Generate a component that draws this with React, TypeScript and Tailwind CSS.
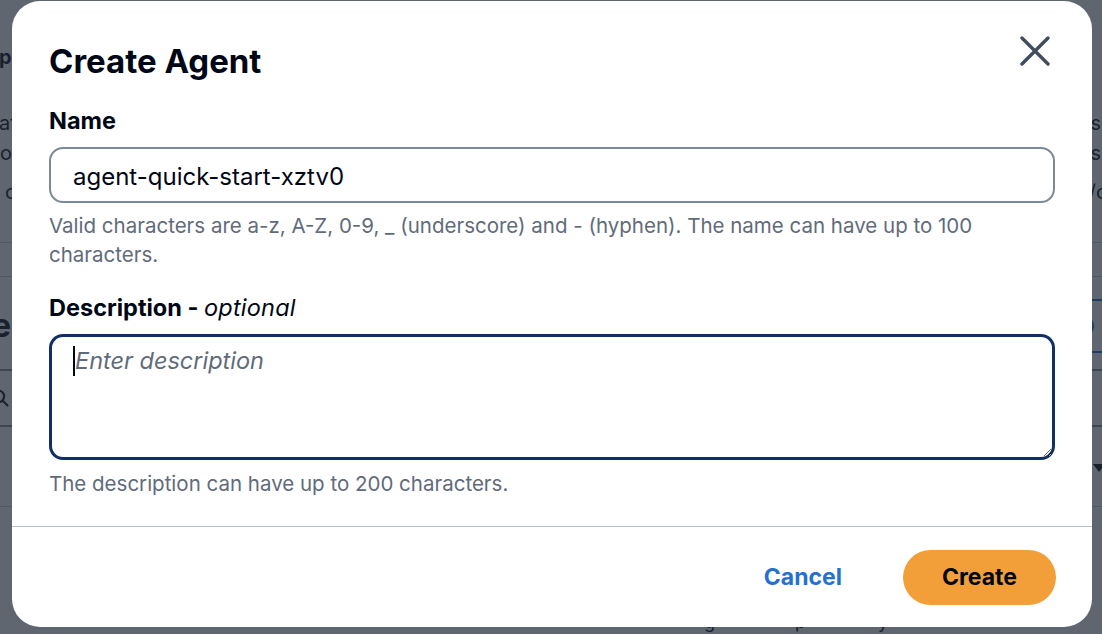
import React from 'react';

// page behind the dialog, only its edges show through the overlay
const BackgroundPage = () => (
  <div className="flex h-full w-full flex-col text-[20px] text-[#000716]">
    <div className="mt-[44px] flex h-[26px] items-center justify-between leading-[26px]">
      <span className="-ml-[1px] font-bold">pa</span>
    </div>
    <div className="mt-[40px] flex h-[26px] items-center justify-between leading-[26px]">
      <span className="-ml-[1px]">at</span>
      <span className="mr-[1px]">s</span>
    </div>
    <div className="mt-[4px] flex h-[26px] items-center justify-between leading-[26px]">
      <span>o</span>
      <span className="mr-[1px]">s</span>
    </div>
    <div className="mt-[13px] flex h-[26px] items-center justify-between leading-[26px]">
      <span className="ml-[5px]">c</span>
      <span className="-mr-[6px]">/o</span>
    </div>
    <div className="mt-[37px] h-px bg-[#c6ccd4]" />
    <div className="mt-[33px] h-px bg-[#c6ccd4]" />
    <div className="mt-[22px] flex h-[54px] items-center justify-between">
      <span className="-ml-[8px] text-[32px] font-bold">e</span>
      <span className="-mr-[30px] flex h-[54px] items-center border-y-2 border-[#0972d3] px-[6px] text-[22px] font-bold text-[#0972d3]">
        D
        <span className="ml-3">el</span>
      </span>
    </div>
    <div className="mt-[16px] h-[2px] bg-[#7d8998]" />
    <div className="flex h-[54px] items-center">
      <svg width="20" height="20" viewBox="0 0 24 24" fill="none" stroke="#000716" strokeWidth="2.5" strokeLinecap="round" className="-ml-[10px]">
        <circle cx="10" cy="10" r="7" />
        <path d="M15 15l6 6" />
      </svg>
    </div>
    <div className="h-[2px] bg-[#7d8998]" />
    <div className="flex h-[79px] items-start justify-end pt-[36px]">
      <svg width="14" height="10" viewBox="0 0 14 10" className="-mr-[4px]">
        <path d="M1 1h12L7 9z" fill="#000716" />
      </svg>
    </div>
    <div className="h-px bg-[#c6ccd4]" />
    <div className="mt-[103px] flex h-[24px] items-start text-[18px] leading-[24px]">
      <span className="ml-[704px]">g</span>
      <span className="ml-[80px]">p</span>
      <span className="ml-[72px]">y</span>
    </div>
  </div>
);

const CloseIcon = () => (
  <svg width="30" height="30" viewBox="0 0 30 30" fill="none" stroke="#414d5c" strokeWidth="3.4" strokeLinecap="round">
    <path d="M2 2l26 26M28 2L2 28" />
  </svg>
);

export default function App() {
  return (
    <div className="relative h-[634px] w-[1102px] overflow-hidden bg-white font-['Inter',sans-serif]">
      <BackgroundPage />

      {/* modal overlay */}
      <div className="absolute inset-0 bg-[rgba(35,43,55,0.72)] pl-3 pt-px">
        <div className="flex h-[626px] w-[1080px] flex-col rounded-[28px] bg-white text-[#000716]">
          <div className="flex items-start justify-between pl-[37px] pr-[42px] pt-[40px]">
            <h2 className="text-[33px] font-bold leading-[40px]">Create Agent</h2>
            <button className="-mt-[5px]" aria-label="Close">
              <CloseIcon />
            </button>
          </div>

          <div className="flex flex-1 flex-col px-[37px]">
            <label className="mt-[25px] text-[23.5px] font-bold leading-[30px]">Name</label>
            <input
              readOnly
              value="agent-quick-start-xztv0"
              className="mt-[11px] h-[56px] w-full rounded-[14px] border-2 border-[#7d8998] px-[22px] pt-[3px] text-[24px] text-[#000716] outline-none"
            />
            <p className="mt-[8px] text-[20.5px] leading-[29px] text-[#5f6b7a]">
              Valid characters are a-z, A-Z, 0-9, _ (underscore) and - (hyphen). The name can have up to 100
              characters.
            </p>

            <label className="mt-[24px] text-[23.5px] leading-[30px]">
              <span className="font-bold">Description - </span>
              <span className="italic tracking-[0.2px]">optional</span>
            </label>
            <div className="relative mt-[11px]">
              <textarea
                placeholder="Enter description"
                className="block h-[126px] w-full rounded-[14px] border-[3px] border-[#102f62] px-[23px] pt-[9px] text-[23.5px] leading-[30px] outline-none placeholder:italic placeholder:text-[#5f6b7a]"
              />
              <span className="absolute left-[24px] top-[12px] h-[30px] w-[2px] bg-[#000716]" />
            </div>
            <p className="mt-[9px] text-[20.5px] leading-[29px] text-[#5f6b7a]">
              The description can have up to 200 characters.
            </p>
          </div>

          <div className="flex h-[101px] items-center justify-end gap-[61px] border-t border-[#b6bec9] pr-[36px]">
            <button className="text-[23px] font-bold text-[#2571d0]">Cancel</button>
            <button className="h-[55px] rounded-full bg-[#f29f3a] px-[39px] text-[23px] font-bold text-[#000716]">
              Create
            </button>
          </div>
        </div>
      </div>
    </div>
  );
}
